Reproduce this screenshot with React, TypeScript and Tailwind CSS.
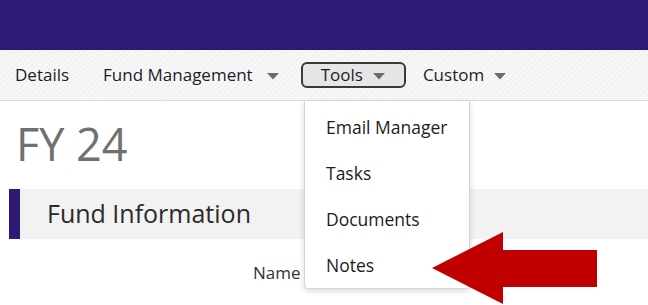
import React from 'react';

const font = { fontFamily: '"Open Sans", "Liberation Sans", sans-serif' };

function Caret({ gap = 'ml-[10px]' }: { gap?: string }) {
  return (
    <svg width="12" height="7" viewBox="0 0 12 7" className={`${gap} mt-[2px]`}>
      <polygon points="0,0 12,0 6,6.5" fill="#6b6b6b" />
    </svg>
  );
}

const menuItems = ['Email Manager', 'Tasks', 'Documents', 'Notes'];

export default function App() {
  return (
    <div className="relative w-full h-[305px] overflow-hidden bg-white" style={font}>
      {/* Top banner */}
      <div className="h-[50px] bg-[#2e1a74]" />

      {/* Nav bar */}
      <nav className="h-[51px] flex items-center border-b border-[#dcdcdc] bg-[repeating-linear-gradient(135deg,#f2f2f2_0px,#f2f2f2_2px,#f8f8f8_2px,#f8f8f8_4px)] text-[17px] text-[#1c1c2a]">
        <span className="ml-[15px]">Details</span>
        <span className="ml-[34px] flex items-center">
          Fund Management
          <Caret gap="ml-[14px]" />
        </span>
        <span className="ml-[22px] flex items-center h-[26px] pl-[18px] pr-[19px] rounded-[6px] border-2 border-[#3a3a3a] bg-[#e6e6e6]">
          Tools
          <Caret />
        </span>
        <span className="ml-[17px] flex items-center">
          Custom
          <Caret />
        </span>
      </nav>

      {/* Page content */}
      <div className="pt-[16px]">
        <h1 className="pl-[16px] text-[45px] leading-[54px] text-[#707070] font-normal">FY 24</h1>
        <div className="mt-[18px] ml-[9px] h-[50px] flex bg-[#f2f2f2]">
          <div className="w-[11px] bg-[#2e1a74]" />
          <h2 className="pl-[27px] flex items-center text-[25px] text-[#2a2a2a]">Fund Information</h2>
        </div>
        <div className="mt-[21px] pl-[253px] text-[17px] text-[#333]">Name</div>
      </div>

      {/* Tools dropdown */}
      <div className="absolute left-[304px] top-[101px] w-[166px] pt-[3px] bg-white border border-t-0 border-[#d6d6d6] rounded-b-[4px] shadow-[0_2px_6px_rgba(0,0,0,0.15)] text-[17.5px] text-[#1c1c1c]">
        {menuItems.map((item) => (
          <div key={item} className="h-[46px] flex items-center pl-[21px]">
            {item}
          </div>
        ))}
      </div>

      {/* Callout arrow */}
      <svg className="absolute left-[432px] top-[232px]" width="166" height="73" viewBox="0 0 166 73">
        <polygon points="0,36 71,0 71,18 165,18 165,55 71,55 71,72" fill="#c00000" />
      </svg>
    </div>
  );
}
